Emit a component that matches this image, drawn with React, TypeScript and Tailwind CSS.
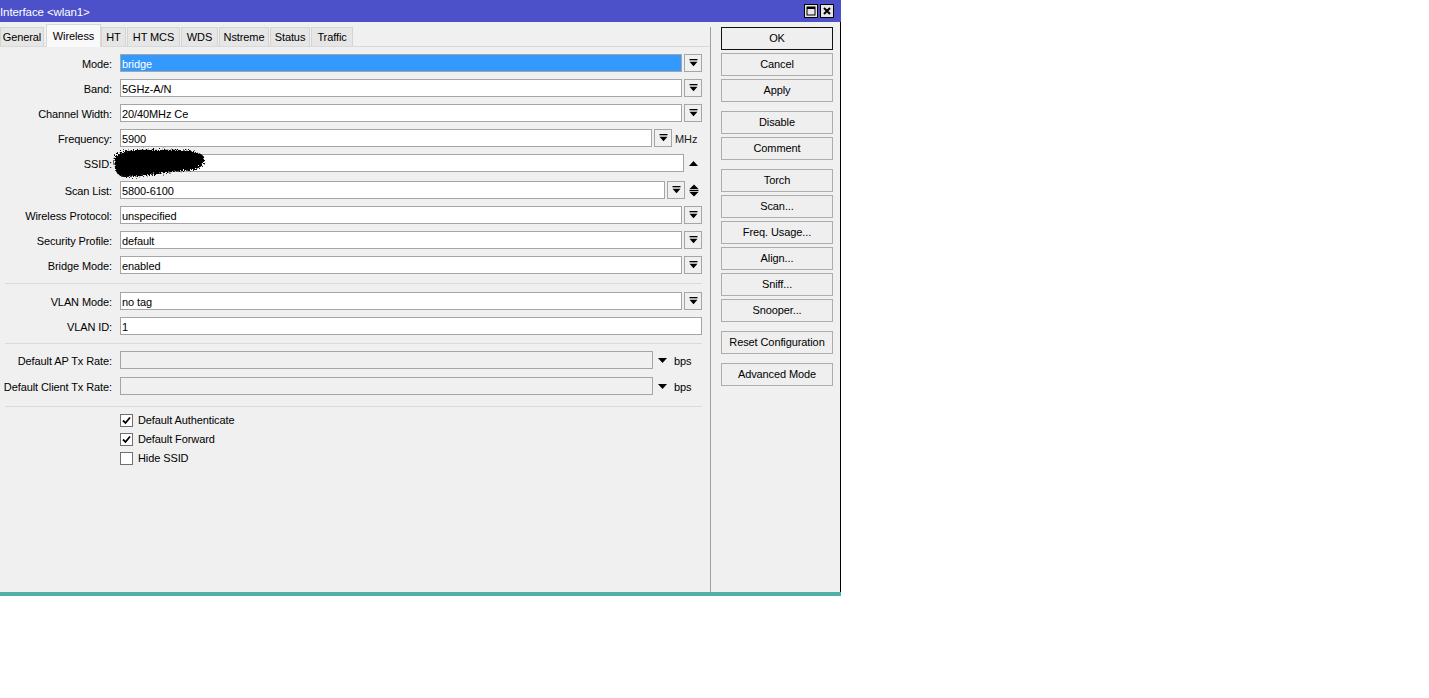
import React from "react";

const FONT = "font-['Liberation_Sans',Arial,sans-serif]";

function DropIcon() {
  return (
    <svg width="9" height="8" viewBox="0 0 9 8">
      <rect x="0.5" y="0" width="8" height="1.3" fill="#000" />
      <polygon points="0.5,2.8 8.5,2.8 4.5,7.2" fill="#000" />
    </svg>
  );
}

function DropBtn({ className = "" }: { className?: string }) {
  return (
    <div
      className={
        "ml-[2px] w-[18px] h-[18px] shrink-0 border border-[#a5a5a5] bg-[#f0f0f0] flex items-center justify-center " +
        className
      }
    >
      <DropIcon />
    </div>
  );
}

function Input({
  value,
  selected = false,
  disabled = false,
}: {
  value?: string;
  selected?: boolean;
  disabled?: boolean;
}) {
  return (
    <div
      className={
        "flex-1 h-[18px] border border-[#a5a5a5] px-[1px] pt-[1px] leading-[16px] whitespace-nowrap overflow-hidden " +
        (selected ? "bg-[#3399ff] text-white" : disabled ? "bg-[#f0f0f0]" : "bg-white")
      }
    >
      {value}
    </div>
  );
}

function Row({
  label,
  children,
  className = "",
}: {
  label: string;
  children: React.ReactNode;
  className?: string;
}) {
  return (
    <div className={"flex items-center h-[18px] " + className}>
      <div className="w-[112px] shrink-0 text-right whitespace-nowrap leading-[18px] pt-[1px]">{label}</div>
      <div className="ml-[8px] flex-1 flex items-center h-full">{children}</div>
    </div>
  );
}

function Sep({ className = "" }: { className?: string }) {
  return <div className={"ml-[5px] h-[1px] bg-[#dadada] " + className} />;
}

function Check({ checked, label }: { checked: boolean; label: string }) {
  return (
    <div className="flex items-center h-[13px] ml-[120px]">
      <div className="w-[13px] h-[13px] border border-[#707070] bg-white flex items-center justify-center">
        {checked && (
          <svg width="9" height="9" viewBox="0 0 9 9">
            <path d="M1 4.5 L3.5 7 L8 1.5" stroke="#000" strokeWidth="1.8" fill="none" />
          </svg>
        )}
      </div>
      <span className="ml-[5px] whitespace-nowrap leading-[13px]">{label}</span>
    </div>
  );
}

function Btn({ label, primary = false, className = "" }: { label: string; primary?: boolean; className?: string }) {
  return (
    <div
      className={
        "w-[112px] h-[23px] flex items-center justify-center border bg-[#efefef] whitespace-nowrap " +
        (primary ? "border-[#111]" : "border-[#adadad]") +
        " " +
        className
      }
    >
      {label}
    </div>
  );
}

const tabs: { name: string; w: number; ml: string }[] = [
  { name: "General", w: 44, ml: "ml-0" },
  { name: "Wireless", w: 55, ml: "ml-[2px]" },
  { name: "HT", w: 25, ml: "ml-0" },
  { name: "HT MCS", w: 53, ml: "ml-[1px]" },
  { name: "WDS", w: 37, ml: "ml-[1px]" },
  { name: "Nstreme", w: 50, ml: "ml-[1px]" },
  { name: "Status", w: 40, ml: "ml-[1px]" },
  { name: "Traffic", w: 42, ml: "ml-[1px]" },
];

export default function App() {
  return (
    <div className={"w-[1429px] h-[698px] bg-white text-[11px] tracking-[-0.1px] text-black " + FONT}>
      <div className="w-[841px] h-[596px] flex flex-col bg-[#f0f0f0] border-b-4 border-b-[#50b0a8]">
        {/* Title bar */}
        <div className="h-[22px] bg-[#4c50c9] flex items-center shrink-0">
          <span className="text-white text-[11.5px] leading-[22px] pt-[2px] whitespace-nowrap">Interface &lt;wlan1&gt;</span>
          <div className="ml-auto mr-[7px] flex gap-[2px]">
            <div className="w-[14px] h-[14px] border border-black bg-[#e6e6e6] flex items-center justify-center">
              <svg width="10" height="10" viewBox="0 0 10 10">
                <rect x="1" y="1" width="8" height="8" fill="none" stroke="#000" strokeWidth="1" />
                <rect x="1" y="1" width="8" height="2" fill="#000" />
              </svg>
            </div>
            <div className="w-[14px] h-[14px] border border-black bg-[#e6e6e6] flex items-center justify-center">
              <svg width="10" height="10" viewBox="0 0 10 10">
                <path d="M2 2 L8 8 M8 2 L2 8" stroke="#000" strokeWidth="2" />
              </svg>
            </div>
          </div>
        </div>

        {/* Body */}
        <div className="flex-1 flex border-r border-r-black">
          {/* Left tab area */}
          <div className="w-[710px] shrink-0 flex flex-col">
            <div className="h-[25px] flex items-end border-b border-[#d9d9d9]">
              {tabs.map((t) =>
                t.name === "Wireless" ? (
                  <div
                    key={t.name}
                    style={{ width: t.w }}
                    className={
                      "h-[23px] -mb-[1px] bg-[#f9f9f9] border border-b-0 border-[#d9d9d9] flex items-center justify-center whitespace-nowrap " +
                      t.ml
                    }
                  >
                    {t.name}
                  </div>
                ) : (
                  <div
                    key={t.name}
                    style={{ width: t.w }}
                    className={
                      "h-[19px] pt-[1px] bg-[#e6e6e6] border border-b-0 border-[#d4d4d4] flex items-center justify-center whitespace-nowrap " +
                      t.ml
                    }
                  >
                    {t.name}
                  </div>
                )
              )}
            </div>

            <div className="flex flex-col pt-[7px] pr-[8px]">
              <div className="flex flex-col gap-[7px]">
                <Row label="Mode:">
                  <Input value="bridge" selected />
                  <DropBtn />
                </Row>
                <Row label="Band:">
                  <Input value="5GHz-A/N" />
                  <DropBtn />
                </Row>
                <Row label="Channel Width:">
                  <Input value="20/40MHz Ce" />
                  <DropBtn />
                </Row>
                <Row label="Frequency:">
                  <Input value="5900" />
                  <DropBtn />
                  <span className="ml-[3px] w-[27px] shrink-0 leading-[18px] pt-[1px] text-[#1a1a1a]">MHz</span>
                </Row>
                <Row label="SSID:" className="relative mb-[2px]">
                  <Input value="" />
                  <div className="w-[18px] shrink-0 flex items-center justify-center">
                    <svg width="9" height="5" viewBox="0 0 9 5">
                      <polygon points="0,5 4.5,0 9,5" fill="#000" />
                    </svg>
                  </div>
                  <div className="absolute left-[112px] top-[-7px] w-[95px] h-[32px]">
                    <svg width="95" height="32" viewBox="0 0 95 32">
                      <defs>
                        <filter id="rough" x="-10%" y="-20%" width="120%" height="140%">
                          <feTurbulence type="fractalNoise" baseFrequency="0.8" numOctaves="3" seed="4" />
                          <feDisplacementMap in="SourceGraphic" scale="6" />
                        </filter>
                      </defs>
                      <g filter="url(#rough)">
                        <path
                          d="M3,9 C6,3 28,2 48,3 C68,2 90,4 92,10 C94,18 88,23 72,24 C55,25 32,30 12,30 C4,30 1,19 3,9 Z"
                          fill="#050505"
                        />
                      </g>
                    </svg>
                  </div>
                </Row>
                <Row label="Scan List:">
                  <Input value="5800-6100" />
                  <DropBtn />
                  <div className="w-[17px] shrink-0 flex items-center justify-center">
                    <svg width="10" height="13" viewBox="0 0 10 13">
                      <polygon points="0.5,5 5,0.5 9.5,5" fill="#000" />
                      <rect x="0.5" y="5.8" width="9" height="1.4" fill="#000" />
                      <polygon points="0.5,8 9.5,8 5,12.5" fill="#000" />
                    </svg>
                  </div>
                </Row>
                <Row label="Wireless Protocol:">
                  <Input value="unspecified" />
                  <DropBtn />
                </Row>
                <Row label="Security Profile:">
                  <Input value="default" />
                  <DropBtn />
                </Row>
                <Row label="Bridge Mode:">
                  <Input value="enabled" />
                  <DropBtn />
                </Row>
              </div>

              <Sep className="mt-[9px] mb-[8px]" />

              <div className="flex flex-col gap-[7px]">
                <Row label="VLAN Mode:">
                  <Input value="no tag" />
                  <DropBtn />
                </Row>
                <Row label="VLAN ID:">
                  <Input value="1" />
                </Row>
              </div>

              <Sep className="mt-[8px] mb-[7px]" />

              <div className="flex flex-col gap-[8px]">
                <Row label="Default AP Tx Rate:">
                  <Input disabled />
                  <div className="ml-[5px] w-[9px] shrink-0 flex items-center">
                    <svg width="9" height="5" viewBox="0 0 9 5">
                      <polygon points="0,0 9,0 4.5,5" fill="#000" />
                    </svg>
                  </div>
                  <span className="ml-[7px] w-[28px] shrink-0 leading-[18px] pt-[1px]">bps</span>
                </Row>
                <Row label="Default Client Tx Rate:">
                  <Input disabled />
                  <div className="ml-[5px] w-[9px] shrink-0 flex items-center">
                    <svg width="9" height="5" viewBox="0 0 9 5">
                      <polygon points="0,0 9,0 4.5,5" fill="#000" />
                    </svg>
                  </div>
                  <span className="ml-[7px] w-[28px] shrink-0 leading-[18px] pt-[1px]">bps</span>
                </Row>
              </div>

              <Sep className="mt-[11px] mb-[7px]" />

              <div className="flex flex-col gap-[6px]">
                <Check checked label="Default Authenticate" />
                <Check checked label="Default Forward" />
                <Check checked={false} label="Hide SSID" />
              </div>
            </div>
          </div>

          {/* Splitter */}
          <div className="w-[1px] mt-[5px] bg-[#a0a0a0] shrink-0" />

          {/* Buttons */}
          <div className="pl-[10px] pt-[5px] flex flex-col">
            <div className="flex flex-col gap-[3px]">
              <Btn label="OK" primary />
              <Btn label="Cancel" />
              <Btn label="Apply" />
            </div>
            <div className="flex flex-col gap-[3px] mt-[9px]">
              <Btn label="Disable" />
              <Btn label="Comment" />
            </div>
            <div className="flex flex-col gap-[3px] mt-[9px]">
              <Btn label="Torch" />
              <Btn label="Scan..." />
              <Btn label="Freq. Usage..." />
              <Btn label="Align..." />
              <Btn label="Sniff..." />
              <Btn label="Snooper..." />
            </div>
            <Btn label="Reset Configuration" className="mt-[9px]" />
            <Btn label="Advanced Mode" className="mt-[9px]" />
          </div>
        </div>
      </div>
    </div>
  );
}
